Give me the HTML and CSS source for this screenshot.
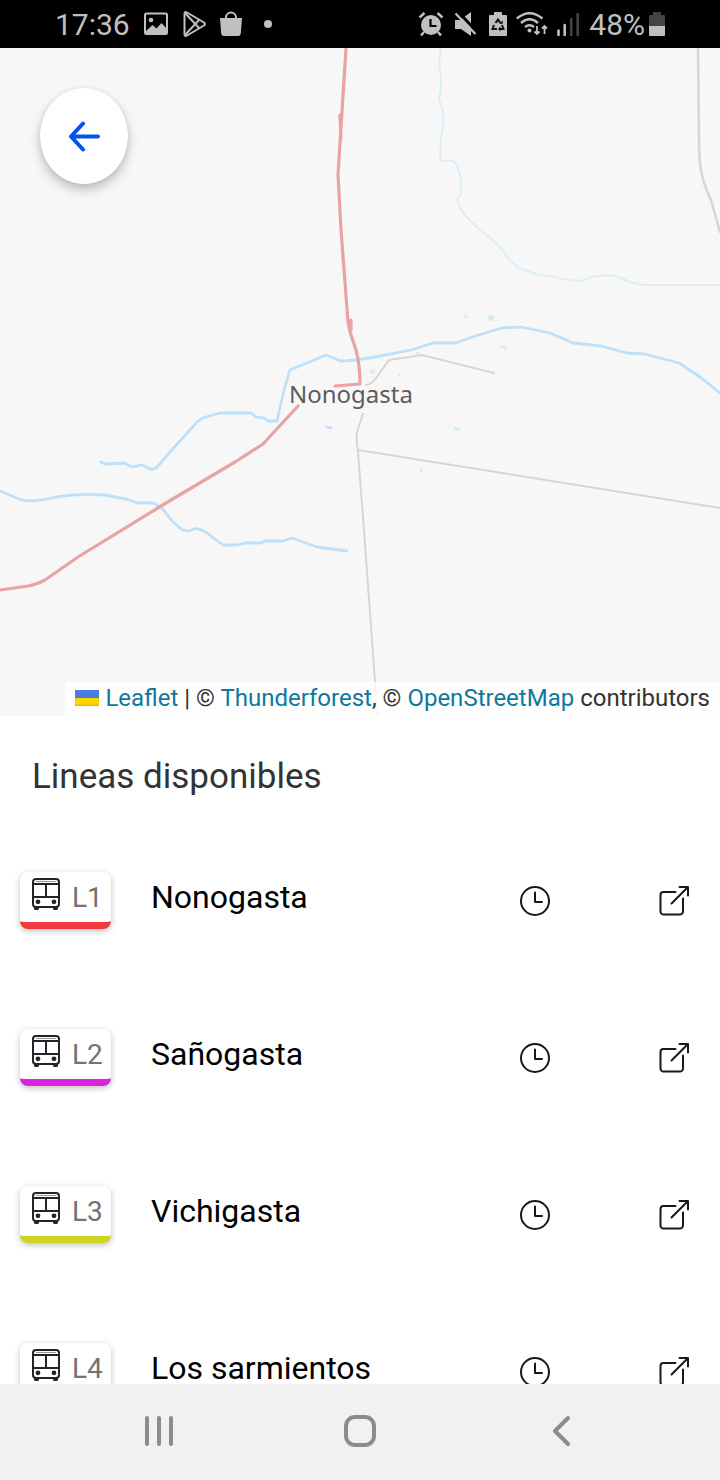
FILE: index.html
```html
<!DOCTYPE html>
<html lang="es">
<head>
<meta charset="utf-8">
<meta name="viewport" content="width=device-width, initial-scale=1">
<title>Lineas disponibles</title>
<link rel="stylesheet" href="styles.css">
</head>
<body>
<svg class="symbols" aria-hidden="true">
  <symbol id="bus" viewBox="0 0 28 32">
    <rect x="1" y="1" width="26" height="28" rx="3" fill="none" stroke="#212529" stroke-width="2"/>
    <path d="M4 3.500H24" stroke="#999" stroke-width="1"/>
    <path d="M2 6H26M2 19H26M14 6V19" fill="none" stroke="#212529" stroke-width="2"/>
    <circle cx="6" cy="23.800" r="2.400" fill="#212529"/>
    <circle cx="22" cy="23.800" r="2.400" fill="#212529"/>
    <path d="M2 28h5v2.500a1.500 1.500 0 0 1-1.500 1.500h-2A1.500 1.500 0 0 1 2 30.500zM21 28h5v2.500a1.500 1.500 0 0 1-1.500 1.500h-2a1.500 1.500 0 0 1-1.500-1.500z" fill="#212529"/>
  </symbol>
  <symbol id="clock" viewBox="0 0 32 32">
    <g fill="none" stroke="#16181b" stroke-width="2" stroke-linecap="round" stroke-linejoin="round">
      <circle cx="16" cy="16" r="14"/><path d="M16 7.500V17h7"/>
    </g>
  </symbol>
  <symbol id="open" viewBox="0 0 32 32">
    <g fill="none" stroke="#16181b" stroke-width="2" stroke-linecap="round" stroke-linejoin="round">
      <path d="M17.500 7H5.500a3 3 0 0 0-3 3V26.500a3 3 0 0 0 3 3H22a3 3 0 0 0 3-3V13.500"/>
      <path d="M13.500 18.500L30 2M21.500 2H30V10.500"/>
    </g>
  </symbol>
</svg>

<header class="status">
  <div class="status-left">
    <span class="status-text">17:36</span>
    <svg width="24" height="24" viewBox="0 0 24 24"><rect x="1" y="1.500" width="22" height="20.500" rx="1.500" fill="none" stroke="#c0c0c0" stroke-width="2"/><circle cx="7" cy="8" r="2.300" fill="#c0c0c0"/><path d="M2 19l6.500-6 4 3.500 5-5.500 5 5.500V22H2z" fill="#c0c0c0"/></svg>
    <svg width="24" height="26" viewBox="0 0 24 26"><g fill="none" stroke="#c0c0c0" stroke-width="2" stroke-linejoin="round"><path d="M2.500 2.500C2.500 1 4 .8 5 1.500L22 11.500Q24 13 22 14.500L5 24.500C4 25.200 2.500 25 2.500 23.500z"/><path d="M3 2L17.500 17.500M3 24L17.500 8.500"/></g></svg>
    <svg width="22" height="26" viewBox="0 0 22 26"><path d="M0 7h22l-1.200 15.500Q20.500 25 18 25H4Q1.500 25 1.200 22.500z" fill="#c0c0c0"/><path d="M6 8V6.500a5 5 0 0 1 10 0V8" fill="none" stroke="#c0c0c0" stroke-width="2"/></svg>
    <span class="status-dot"></span>
  </div>
  <div class="status-right">
    <svg width="27" height="24" viewBox="0 0 27 24"><circle cx="13" cy="13" r="10" fill="#c0c0c0"/><path d="M12.500 7v7h6" fill="none" stroke="#000" stroke-width="2.200"/><path d="M1.500 5.500l5-4.500M24.500 5.500l-5-4.500M6 20l-3 3.500M20 20l3 3.500" stroke="#c0c0c0" stroke-width="2.500"/></svg>
    <svg width="26" height="24" viewBox="0 0 26 24"><path d="M1 8h5L17 0V24L7 17H1z" fill="#c0c0c0"/><path d="M3.500-1L24 21" stroke="#000" stroke-width="3"/><path d="M1.500 1.500L21.500 22" stroke="#c0c0c0" stroke-width="2.300"/></svg>
    <svg width="18" height="24" viewBox="0 0 18 24"><path d="M5 0h8v3h4q1 0 1 1v19q0 1-1 1H1q-1 0-1-1V4q0-1 1-1h4z" fill="#c0c0c0"/><g fill="none" stroke="#111" stroke-width="2"><path d="M6.500 11L9 7.500l2.500 3.500M5 13l-1.500 4H8M13 13l1.500 4H11"/></g><path d="M11.500 14.500v5L9 17zM10 11.500l3.500.5.500-3.500z" fill="#111"/></svg>
    <svg width="32" height="24" viewBox="0 0 32 24"><g fill="none" stroke="#c0c0c0" stroke-width="2.400"><path d="M.8 6.500Q13.500-4 26.500 6.500M5 11Q13.500 3.500 22 11M9 15Q13.500 11.500 18 15"/><path d="M21 14v8M18.500 19.500L21 22l2.500-2.500M28.500 22v-8M26 16.500l2.500-2.500 2.500 2.500" stroke-width="1.800"/></g><circle cx="13.500" cy="18.500" r="2" fill="#c0c0c0"/></svg>
    <svg width="23" height="24" viewBox="0 0 23 24"><path d="M1.500 18.500V23M7.700 13V23" stroke="#c0c0c0" stroke-width="2.600" stroke-linecap="round"/><path d="M14.200 7V23M20.700 2V23" stroke="#444" stroke-width="2.600" stroke-linecap="round"/></svg>
    <span class="status-text">48%</span>
    <svg class="battery" width="16" height="24" viewBox="0 0 16 24"><path d="M4 0h8v3h3q1 0 1 1V14H0V4q0-1 1-1h3z" fill="#444"/><path d="M0 14h16v9q0 1-1 1H1q-1 0-1-1z" fill="#c0c0c0"/></svg>
  </div>
</header>

<main class="app">
  <section class="map" aria-label="Mapa">
    <svg class="map-canvas" viewBox="0 48 720 668">
      <g fill="none" stroke-linejoin="round" stroke-linecap="round">
        <path d="M441 48L439 62 441 75 441 88 439 98 443 112 443 128 441 138 440 155Q440 161 444 161H453Q457 163 459 172L461 180V194L457 199 460 208Q463 215 478 228L488 236 500 247 509 259Q516 267 521 269L528 271 538 275 550 276 562 279 580 281 592 277 607 275 616 276 630 282 643 285H720" stroke="#dceefa" stroke-width="2"/>
        <g stroke="#bde1fb" stroke-width="2.800">
          <path d="M101 462L105 464 124 463 132 467 142 465 150 469Q155 470 158 466L170 452 198 421Q203 417 220 413H251L256 417 264 418 268 421H277L284 390 290 370 326 355 341 361Q353 361 380 356L411 350 433 343H456L472 337 502 328 521 327 550 333 573 343 601 346 627 353 645 354 679 363 700 377 720 393"/>
          <path d="M0 491L19 499Q28 502 42 500L56 497Q80 493 104 495L126 499 138 503H153L162 508 172 521 181 529Q186 532 192 530 197 526 207 533L223 545H237L246 543H261L265 541 283 541 292 538 317 547 347 551"/>
          <path d="M327 427L331 428"/>
        </g>
        <g stroke="#d6d6d6" stroke-width="2">
          <path d="M698 48L699 140Q699 164 702 175 704 185 711 200L720 232" stroke-width="2.600"/>
          <path d="M366 385Q372 384 376 378L389 360 422 355 494 373"/>
          <path d="M363 414L357 432Q356 440 358 452L364 530 375 682 377 716"/>
          <path d="M358 450L720 508"/>
        </g>
        <g stroke="#e8a3a5" stroke-width="3.200">
          <path d="M346 48L342 112 338 174 341 230 348 322 350 332 356 350Q360 365 360 384L335 386M340 115L341 138M351 320L351 330"/>
          <path d="M298 406L263 444 235 462 166 503 78 557 45 580Q38 584 28 586L0 590"/>
        </g>
      </g>
      <g fill="#d6f2dc">
        <rect x="488" y="315" width="6" height="6" rx="2"/><rect x="464" y="315" width="4" height="3" rx="1"/><path d="M500 345l7 2v3l-6-2zM369 370l6-1v5h-5z"/><rect x="398" y="374" width="3" height="2"/><rect x="416" y="352" width="4" height="3"/><rect x="454" y="427" width="6" height="4" rx="1"/><rect x="420" y="468" width="3" height="4"/>
      </g>
      <text class="place" x="289" y="403">Nonogasta</text>
    </svg>
    <button class="back" type="button" aria-label="Volver">
      <svg width="32" height="32" viewBox="0 0 32 32"><path d="M15 3.500L3 16.500 15 29.500M3 16.500H30" fill="none" stroke="#0054e9" stroke-width="4" stroke-linecap="round" stroke-linejoin="round"/></svg>
    </button>
    <div class="credits">
      <svg class="flag" width="24" height="16" viewBox="0 0 24 16"><path fill="#4c7be1" d="M0 0h24v8H0z"/><path fill="#ffd500" d="M0 8h24v8H0z"/><path fill="#e0bc00" d="M0 14.500h24V16H0z"/></svg>
      <p><a href="#leaflet">Leaflet</a> | © <a href="#thunderforest">Thunderforest</a>, © <a href="#osm">OpenStreetMap</a> contributors</p>
    </div>
  </section>

  <section class="lines">
    <h1>Lineas disponibles</h1>
    <ul>
      <li class="line">
        <span class="badge red"><svg width="28" height="32"><use href="#bus"/></svg><span class="code">L1</span></span>
        <span class="name">Nonogasta</span>
        <button type="button" aria-label="Horarios Nonogasta"><svg width="32" height="32"><use href="#clock"/></svg></button>
        <button type="button" aria-label="Abrir Nonogasta"><svg width="32" height="32"><use href="#open"/></svg></button>
      </li>
      <li class="line">
        <span class="badge magenta"><svg width="28" height="32"><use href="#bus"/></svg><span class="code">L2</span></span>
        <span class="name">Sañogasta</span>
        <button type="button" aria-label="Horarios Sañogasta"><svg width="32" height="32"><use href="#clock"/></svg></button>
        <button type="button" aria-label="Abrir Sañogasta"><svg width="32" height="32"><use href="#open"/></svg></button>
      </li>
      <li class="line">
        <span class="badge lime"><svg width="28" height="32"><use href="#bus"/></svg><span class="code">L3</span></span>
        <span class="name">Vichigasta</span>
        <button type="button" aria-label="Horarios Vichigasta"><svg width="32" height="32"><use href="#clock"/></svg></button>
        <button type="button" aria-label="Abrir Vichigasta"><svg width="32" height="32"><use href="#open"/></svg></button>
      </li>
      <li class="line">
        <span class="badge red"><svg width="28" height="32"><use href="#bus"/></svg><span class="code">L4</span></span>
        <span class="name">Los sarmientos</span>
        <button type="button" aria-label="Horarios Los sarmientos"><svg width="32" height="32"><use href="#clock"/></svg></button>
        <button type="button" aria-label="Abrir Los sarmientos"><svg width="32" height="32"><use href="#open"/></svg></button>
      </li>
    </ul>
  </section>
</main>

<nav class="system">
  <button type="button" aria-label="Recientes"><svg width="32" height="32" viewBox="0 0 32 32"><path d="M4 3V29M16 3V29M28 3V29" stroke="#8c8c8c" stroke-width="4" stroke-linecap="round"/></svg></button>
  <button type="button" aria-label="Inicio"><svg width="32" height="32" viewBox="0 0 32 32"><rect x="2" y="2" width="28" height="28" rx="9" fill="none" stroke="#8c8c8c" stroke-width="4"/></svg></button>
  <button type="button" aria-label="Atrás"><svg width="32" height="32" viewBox="0 0 32 32"><path d="M23 3L10 16 23 29" fill="none" stroke="#8c8c8c" stroke-width="4" stroke-linecap="round" stroke-linejoin="round"/></svg></button>
</nav>
</body>
</html>
```
FILE: styles.css
```css
* {
  box-sizing: border-box;
}

body {
  margin: 0;
  height: 100vh;
  display: flex;
  flex-direction: column;
  background: #fff;
  font-family: Roboto, "Liberation Sans", sans-serif;
  overflow: hidden;
}

svg {
  display: block;
  flex: none;
}

button {
  border: 0;
  padding: 0;
  background: none;
  display: flex;
  align-items: center;
  justify-content: center;
}

.symbols {
  display: none;
}

.status {
  flex: none;
  height: 48px;
  padding: 0 55px;
  display: flex;
  align-items: center;
  justify-content: space-between;
  background: #000;
  color: #c0c0c0;
}

.status-left,
.status-right {
  display: flex;
  align-items: center;
}

.status-left {
  gap: 14px;
}

.status-right {
  gap: 9px;
}

.status-text {
  padding-top: 2px;
  font-size: 30px;
  line-height: 46px;
}

.status-dot {
  width: 8px;
  height: 8px;
  margin-left: 8px;
  border-radius: 50%;
  background: #c0c0c0;
}

.battery {
  margin-left: -5px;
}

.app {
  flex: 1;
  min-height: 0;
  overflow: hidden;
}

.map {
  position: relative;
  background: #f7f7f7;
}

.map-canvas {
  width: 100%;
  height: auto;
}

.place {
  font-family: "Noto Sans", sans-serif;
  font-size: 24px;
  fill: #5c5c5c;
  stroke: #f7f7f7;
  stroke-width: 4px;
  paint-order: stroke;
}

.back {
  position: absolute;
  top: 40px;
  left: 40px;
  width: 88px;
  height: 96px;
  border-radius: 50%;
  background: #fff;
  box-shadow: 0 6px 12px rgba(0, 0, 0, 0.22), 0 1px 6px rgba(0, 0, 0, 0.08);
}

.credits {
  position: absolute;
  right: 0;
  bottom: 0;
  padding: 0 10px 2px;
  display: flex;
  align-items: center;
  gap: 6px;
  background: rgba(255, 255, 255, 0.8);
  color: #333;
  font-size: 24px;
  line-height: 32px;
  white-space: nowrap;
}

.credits p {
  margin: 0;
}

.credits a {
  color: #0f789e;
  text-decoration: none;
}

.lines h1 {
  margin: 0;
  padding: 40px 32px 24px;
  color: #333;
  font-size: 35px;
  font-weight: 400;
  line-height: 42px;
}

.lines ul {
  margin: 0;
  padding: 0;
  list-style: none;
}

.line {
  height: 157px;
  padding: 0 22px 0 20px;
  display: flex;
  align-items: center;
}

.line button {
  width: 48px;
  height: 48px;
}

.line button + button {
  margin-left: 91px;
}

.badge {
  width: 91px;
  height: 57px;
  padding: 0 8px 6px 12px;
  display: flex;
  align-items: center;
  gap: 12px;
  border-bottom: 7px solid;
  border-radius: 8px;
  background: #fff;
  box-shadow: 0 2px 6px rgba(0, 0, 0, 0.25);
  color: #737373;
  font-size: 28px;
}

.code {
  padding-top: 6px;
}

.red {
  border-bottom-color: #ef3b3f;
}

.magenta {
  border-bottom-color: #dc22dc;
}

.lime {
  border-bottom-color: #d0d41c;
}

.name {
  flex: 1;
  padding: 0 0 7px 40px;
  color: #000;
  font-size: 32px;
}

.system {
  flex: none;
  height: 96px;
  padding: 0 58px 2px;
  display: grid;
  grid-template-columns: repeat(3, 1fr);
  background: #f1f1f1;
}
```
